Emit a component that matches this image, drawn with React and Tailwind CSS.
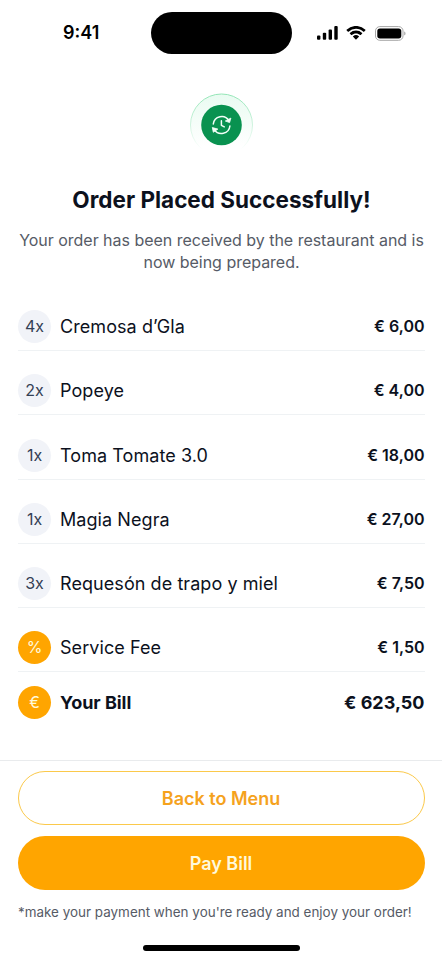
const items = [
  { qty: "4x", name: "Cremosa d’Gla", price: "€ 6,00" },
  { qty: "2x", name: "Popeye", price: "€ 4,00" },
  { qty: "1x", name: "Toma Tomate 3.0", price: "€ 18,00" },
  { qty: "1x", name: "Magia Negra", price: "€ 27,00" },
  { qty: "3x", name: "Requesón de trapo y miel", price: "€ 7,50" },
  { qty: "%", name: "Service Fee", price: "€ 1,50", accent: true },
];

function Badge({ accent, children }) {
  return (
    <span
      className={
        "flex size-[33px] shrink-0 items-center justify-center rounded-full pb-px text-base leading-[32px] " +
        (accent ? "bg-[#ffa500] text-[#fff9db]" : "bg-[#f1f3f8] text-[#344054]")
      }
    >
      {children}
    </span>
  );
}

function StatusBar() {
  return (
    <header className="flex h-[54px] items-end">
      <div className="h-[42px] w-[151px] pl-[63px] text-[18px] leading-[41px] font-semibold text-black">
        9:41
      </div>
      <div className="h-[42px] w-[141px] rounded-full bg-black" />
      <div className="flex h-[42px] items-center pl-[25px]">
        <svg width="21" height="14" viewBox="0 0 21 14" fill="#000">
          <rect x="0" y="9.5" width="3.4" height="4.3" rx="1" />
          <rect x="5.8" y="6.7" width="3.4" height="7.1" rx="1" />
          <rect x="11.6" y="3.5" width="3.4" height="10.3" rx="1" />
          <rect x="17.3" y="0" width="3.4" height="13.8" rx="1" />
        </svg>
        <svg className="ml-2" width="20" height="14" viewBox="0 0 17 12" fill="#000">
          <path d="M8.5 2.4c2.4 0 4.7.9 6.4 2.6.1.1.3.1.5 0l1.2-1.3c.1-.1.1-.4 0-.5a11.7 11.7 0 0 0-16.2 0c-.1.1-.1.4 0 .5L1.600 5c.1.1.3.1.5 0a9.300 9.300 0 0 1 6.400-2.600Z" />
          <path d="M8.500 6.400c1.300 0 2.600.5 3.600 1.400.1.1.3.1.5 0l1.200-1.300c.1-.1.1-.4 0-.5a7.700 7.700 0 0 0-10.600 0c-.1.1-.1.4 0 .5l1.200 1.300c.1.1.3.1.5 0 1-.9 2.300-1.400 3.600-1.400Z" />
          <path d="M11 9.200c.1-.1.1-.3 0-.5a3.800 3.800 0 0 0-5 0c-.2.2-.2.4 0 .5l2.200 2.300c.1.1.4.1.5 0L11 9.200Z" />
        </svg>
        <svg className="ml-[9px]" width="31" height="15" viewBox="0 0 31 15">
          <rect x=".5" y=".6" width="27.500" height="13.700" rx="4.300" fill="none" stroke="#a6a6a6" />
          <rect x="2.300" y="2.400" width="24" height="10.100" rx="2.700" fill="#000" />
          <path d="M29.200 5.600v3.800c.8-.3 1.300-1 1.300-1.900s-.5-1.600-1.300-1.900Z" fill="#a6a6a6" />
        </svg>
      </div>
    </header>
  );
}

function OrderIcon() {
  return (
    <svg className="mt-[39px] ml-[189.500px]" width="64" height="64" viewBox="0 0 64 64" fill="none">
      <defs>
        <linearGradient id="halo" x1="0" y1="0" x2="0" y2="1">
          <stop offset="0" stopColor="#e9fbf1" />
          <stop offset=".85" stopColor="#ffffff" />
        </linearGradient>
        <linearGradient id="ring" x1="0" y1="0" x2="0" y2="1">
          <stop offset="0" stopColor="#93e5b6" />
          <stop offset=".9" stopColor="#ffffff" />
        </linearGradient>
      </defs>
      <circle cx="31.500" cy="32" r="31" fill="url(#halo)" stroke="url(#ring)" />
      <circle cx="31.500" cy="32" r="20.300" fill="#099250" />
      <g stroke="#f3fff8" strokeWidth="1.500" strokeLinecap="round" strokeLinejoin="round">
        <path d="M23.300 31a8.400 8.400 0 0 1 15.600-3.300" />
        <path d="M39.900 33a8.400 8.400 0 0 1-15.600 3.300" />
        <path d="M31.400 27.700v4.600l2.900 1.500" />
      </g>
      <g fill="#f3fff8" stroke="#f3fff8" strokeWidth=".8" strokeLinejoin="round">
        <path d="M40.900 25.100 39.600 29.600 35.300 28Z" />
        <path d="M22.300 34.500 27.900 36.100 23.300 39.300Z" />
      </g>
    </svg>
  );
}

export default function App() {
  return (
    <main className="flex h-[960px] w-[442px] flex-col overflow-hidden bg-white font-['Inter',sans-serif] text-[#0c111d]">
      <StatusBar />
      <OrderIcon />
      <section className="mt-[27px] text-center">
        <h1 className="pl-px text-[22.500px] leading-8 font-bold">Order Placed Successfully!</h1>
        <p className="mx-auto mt-[13px] w-[412px] pl-px text-base leading-[22px] tracking-[-0.02px] text-[#565b66]">
          Your order has been received by the restaurant and is now being prepared.
        </p>
      </section>
      <ul className="mr-[17px] ml-[18px] mt-[37px] flex flex-col gap-[23.300px]">
        {items.map((item) => (
          <li key={item.name} className="flex h-[41px] items-start border-b border-[#eff2f4]">
            <Badge accent={item.accent}>{item.qty}</Badge>
            <span className="ml-[9px] flex-1 text-[18px] leading-[33px] tracking-[0.07px]">{item.name}</span>
            <span className="pr-[0.500px] text-base leading-[33px] font-semibold">{item.price}</span>
          </li>
        ))}
      </ul>
      <div className="mr-[17px] ml-[18px] mt-[14px] flex items-center">
        <Badge accent>€</Badge>
        <span className="ml-[9px] flex-1 text-[18px] font-bold tracking-[-0.03px]">Your Bill</span>
        <span className="pr-[0.500px] text-[18px] font-bold">€ 623,50</span>
      </div>
      <footer className="mt-auto flex h-[200px] flex-col items-center border-t border-[#e9ebed] pr-[17px] pl-[18px] pt-[10px]">
        <button className="h-[54px] w-full shrink-0 rounded-full border border-[#fbc94b] pr-px text-[18px] font-semibold text-[#f5a21d]">
          Back to Menu
        </button>
        <button className="mt-[11px] h-[54px] w-full shrink-0 rounded-full bg-[#ffa500] pr-px text-[18px] font-semibold text-[#fff9db]">
          Pay Bill
        </button>
        <p className="mt-[12px] w-full text-[13.450px] leading-5 whitespace-nowrap text-[#565b66]">
          *make your payment when you're ready and enjoy your order!
        </p>
        <div className="mt-[23px] h-[6px] w-[157px] shrink-0 rounded-full bg-black" />
      </footer>
    </main>
  );
}
